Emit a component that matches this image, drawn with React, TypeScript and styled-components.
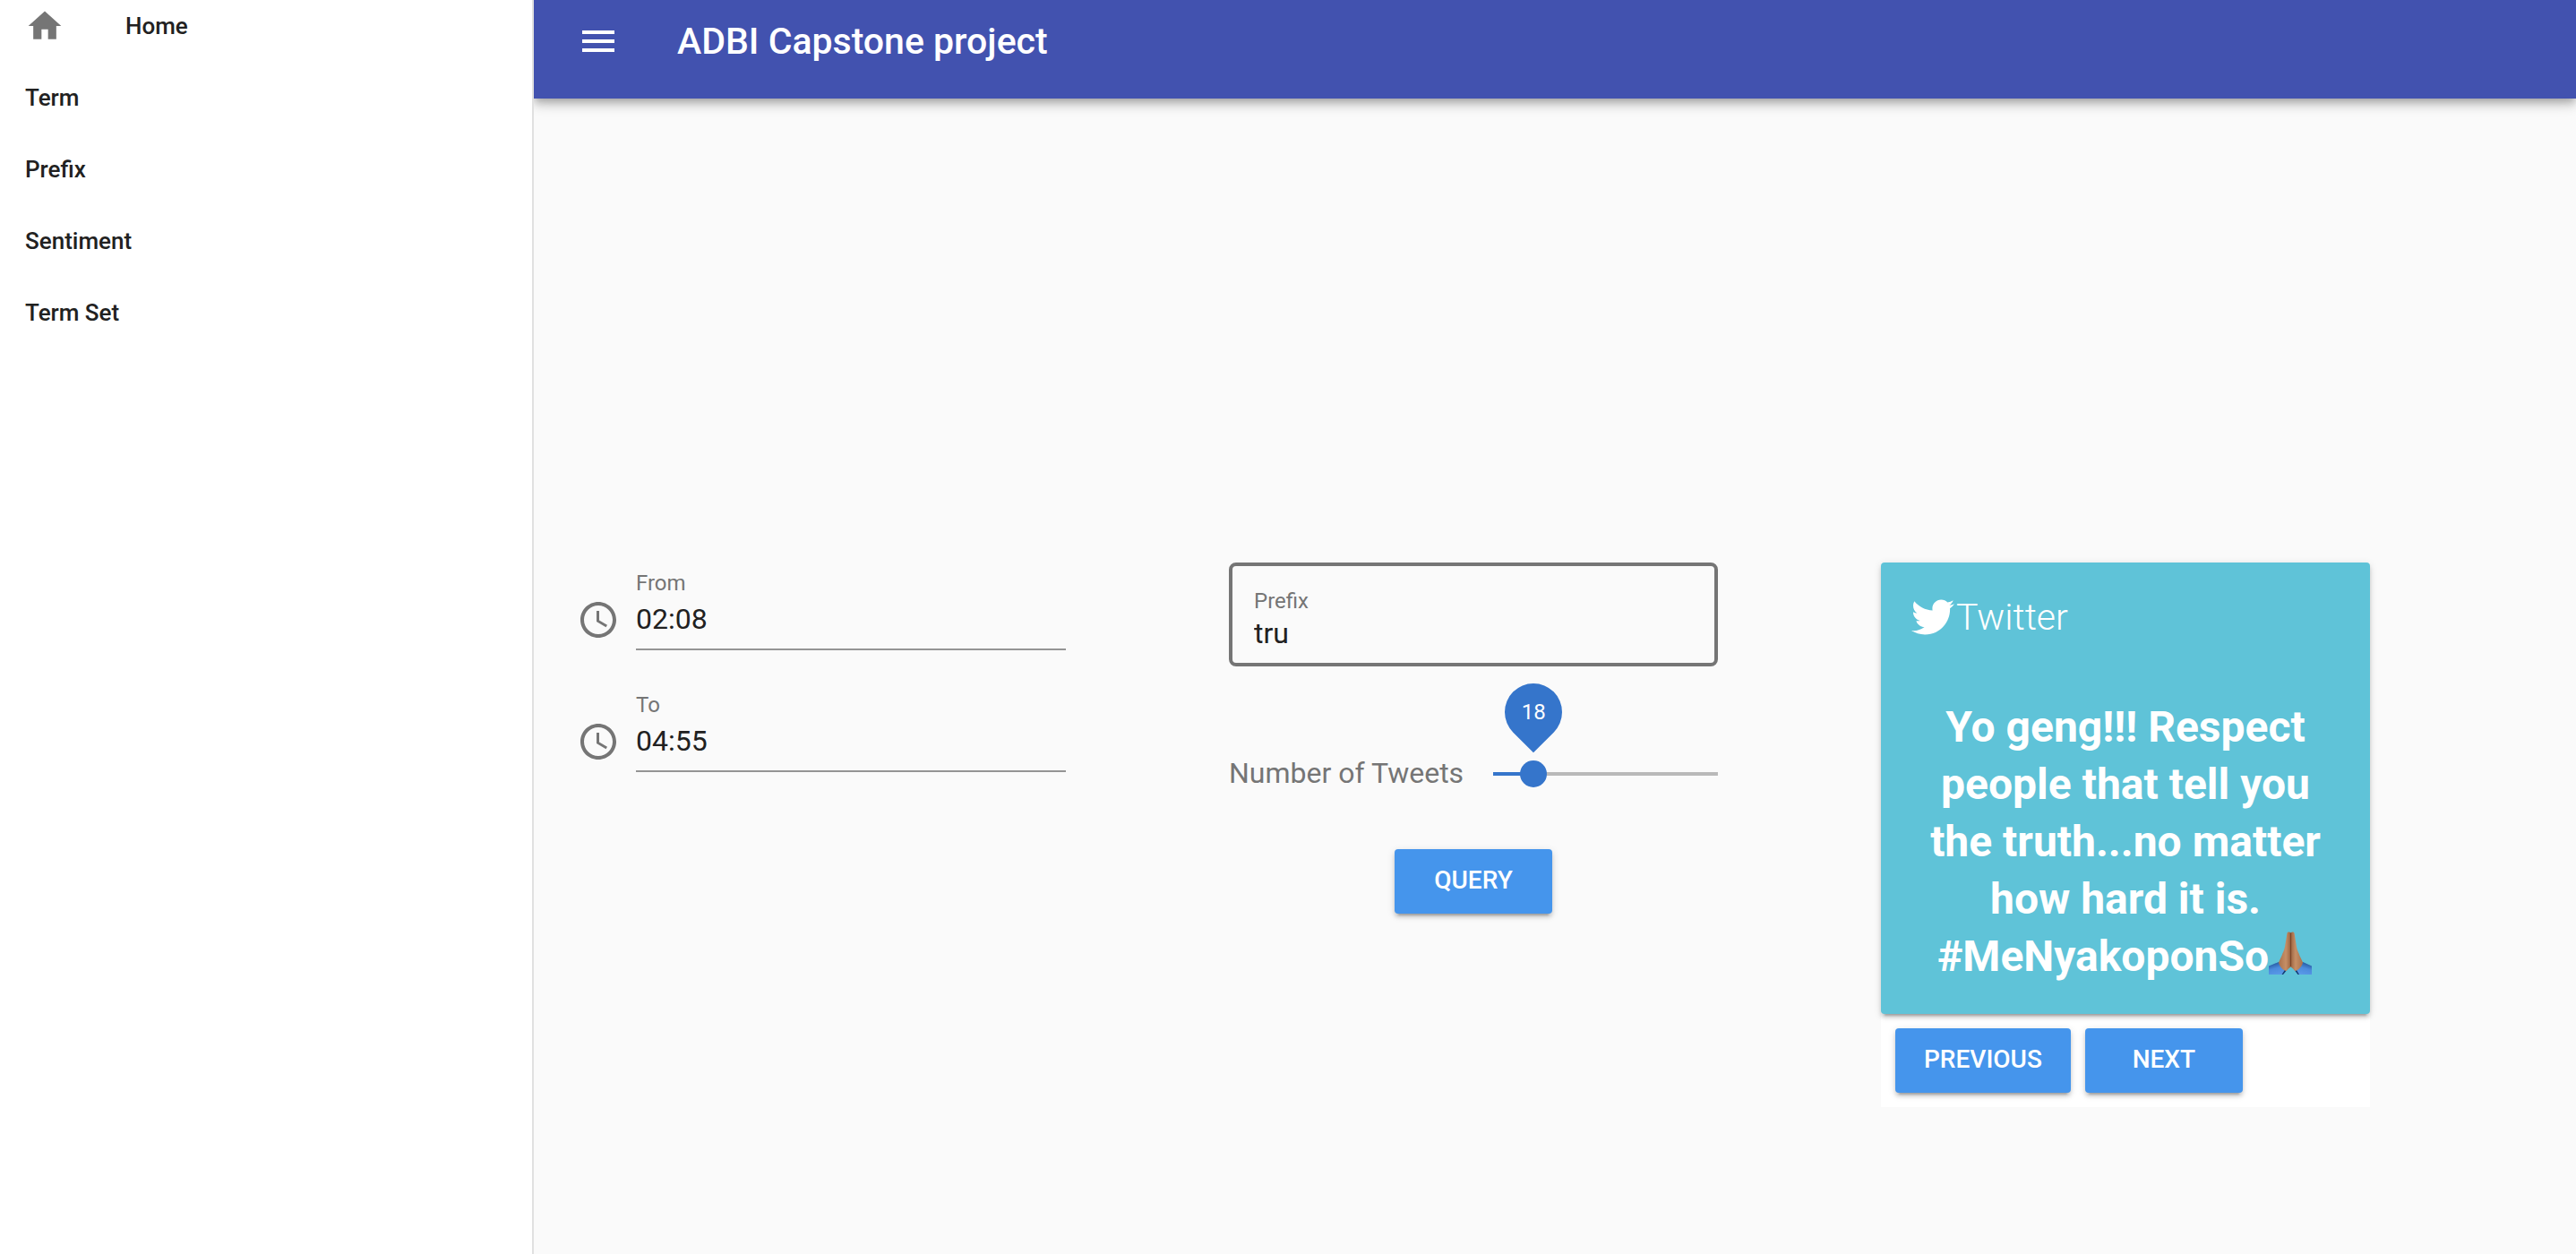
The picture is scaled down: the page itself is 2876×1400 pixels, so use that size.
import React, { useState } from "react";
import styled, { createGlobalStyle } from "styled-components";
import { MdAccessTime, MdHome, MdMenu } from "react-icons/md";
import { FaTwitter } from "react-icons/fa";

const GlobalStyle = createGlobalStyle`
  *, *::before, *::after { box-sizing: border-box; }
  body {
    margin: 0;
    background: #fafafa;
    color: #212121;
    font-family: Roboto, "Liberation Sans", sans-serif;
    -webkit-font-smoothing: antialiased;
  }
`;

const Shell = styled.div`
  display: flex;
  min-height: 100vh;
`;

const Drawer = styled.aside`
  position: relative;
  z-index: 1;
  flex: 0 0 596px;
  background: #fff;
  border-right: 2px solid #e0e0e0;
`;

const NavList = styled.nav`
  display: flex;
  flex-direction: column;
  gap: 22px;
`;

const NavLink = styled.a`
  display: flex;
  align-items: center;
  gap: 68px;
  height: 58px;
  padding: 0 28px;
  color: #212121;
  font-size: 26px;
  font-weight: 500;
  line-height: 32px;
  text-decoration: none;

  svg {
    color: #757575;
  }
`;

const Page = styled.div`
  flex: 1;
  min-width: 0;
`;

const TopBar = styled.header`
  display: flex;
  align-items: center;
  gap: 64px;
  height: 110px;
  padding: 0 48px 18px;
  background: #4252af;
  color: #fff;
  box-shadow: 0 4px 8px -2px rgba(0, 0, 0, 0.2), 0 8px 10px rgba(0, 0, 0, 0.14),
    0 2px 20px rgba(0, 0, 0, 0.12);
`;

const IconButton = styled.button`
  display: flex;
  padding: 0;
  border: 0;
  background: none;
  color: inherit;
`;

const Title = styled.h1`
  margin: 0;
  font-size: 41px;
  font-weight: 500;
  line-height: 48px;
`;

const Columns = styled.main`
  display: grid;
  grid-template-columns: repeat(12, 1fr);
  align-items: start;
  padding: 518px 48px 48px;
`;

const Column = styled.section<{ $start: number }>`
  grid-column: ${(p) => p.$start} / span 3;
  display: flex;
  flex-direction: column;
`;

const TimeRow = styled.div`
  display: flex;
  align-items: flex-end;
  gap: 18px;
  padding-top: 9px;

  & + & {
    margin-top: 38px;
  }

  svg {
    flex: none;
    margin-bottom: 10px;
    color: #757575;
  }
`;

const UnderlinedField = styled.div`
  flex: 1;
  display: flex;
  flex-direction: column;
  gap: 7px;
  padding-bottom: 14px;
  border-bottom: 2px solid #949494;
`;

const OutlinedField = styled.div`
  display: flex;
  flex-direction: column;
  gap: 3px;
  padding: 25px 24px 14px;
  border: 4px solid #757575;
  border-radius: 8px;
`;

const FieldLabel = styled.label`
  color: #757575;
  font-size: 24px;
  line-height: 28px;
`;

const FieldInput = styled.input`
  width: 100%;
  height: 38px;
  padding: 0;
  border: 0;
  outline: 0;
  background: none;
  color: #212121;
  font: 400 32px/38px Roboto, "Liberation Sans", sans-serif;
`;

const SliderRow = styled.div`
  display: flex;
  align-items: center;
  gap: 33px;
  height: 48px;
  margin: 96px 0 60px;
`;

const SliderLabel = styled.label`
  padding-bottom: 2px;
  color: #757575;
  font-size: 32px;
  line-height: 38px;
  white-space: nowrap;
`;

const SliderTrack = styled.div`
  position: relative;
  flex: 1;
  min-width: 0;
  height: 30px;
  background-position: center;
  background-size: 100% 4px;
  background-repeat: no-repeat;
`;

const SliderInput = styled.input`
  display: block;
  appearance: none;
  width: calc(100% + 30px);
  height: 30px;
  margin: 0 -15px;
  background: none;

  &::-webkit-slider-thumb {
    appearance: none;
    width: 30px;
    height: 30px;
    border-radius: 50%;
    background: #3575cb;
  }
`;

const SliderPin = styled.output`
  position: absolute;
  bottom: 52px;
  z-index: 0;
  display: flex;
  align-items: center;
  justify-content: center;
  width: 64px;
  height: 64px;
  margin-left: -32px;
  color: #fff;
  font-size: 24px;
  line-height: 28px;

  &::before {
    content: "";
    position: absolute;
    inset: 0;
    z-index: -1;
    border-radius: 50% 50% 50% 0;
    background: #3575cb;
    transform: rotate(-45deg);
  }
`;

const Button = styled.button<{ $centered?: boolean }>`
  align-self: ${(p) => (p.$centered ? "center" : "auto")};
  min-width: 176px;
  height: 72px;
  padding: 0 32px 2px;
  border: 0;
  border-radius: 4px;
  background: #4595ec;
  color: #fff;
  font: 500 28px/32px Roboto, "Liberation Sans", sans-serif;
  text-transform: uppercase;
  box-shadow: 0 6px 2px -4px rgba(0, 0, 0, 0.2), 0 4px 4px rgba(0, 0, 0, 0.14),
    0 2px 10px rgba(0, 0, 0, 0.12);
`;

const TweetPanel = styled.div`
  background: #fff;
`;

const TweetCard = styled.article`
  padding: 32px;
  border-radius: 4px;
  background: #5fc3d8;
  color: #fff;
  box-shadow: 0 6px 2px -4px rgba(0, 0, 0, 0.2), 0 4px 4px rgba(0, 0, 0, 0.14),
    0 2px 10px rgba(0, 0, 0, 0.12);
`;

const CardHeader = styled.h2`
  display: flex;
  align-items: center;
  gap: 2px;
  margin: 0;
  height: 58px;
  padding-left: 2px;
  font-size: 41px;
  font-weight: 300;
  line-height: 48px;
`;

const TweetText = styled.p`
  margin: 62px 0 0;
  font-size: 48px;
  font-weight: 700;
  line-height: 64px;
  text-align: center;
`;

const Emoji = styled.svg`
  width: 48px;
  height: 48px;
  margin: 0 2px -8px 0;
  vertical-align: 4px;
`;

const CardActions = styled.div`
  display: flex;
  gap: 16px;
  padding: 16px;
`;

const FoldedHands = () => (
  <Emoji viewBox="0 0 48 48" role="img" aria-label="folded hands">
    <defs>
      <linearGradient id="skinLeft" x1="0" x2="1">
        <stop offset="0" stopColor="#a9714c" />
        <stop offset="0.6" stopColor="#c68f66" />
        <stop offset="1" stopColor="#9c6441" />
      </linearGradient>
      <linearGradient id="skinRight" x1="0" x2="1">
        <stop offset="0" stopColor="#9c6441" />
        <stop offset="0.4" stopColor="#c68f66" />
        <stop offset="1" stopColor="#a9714c" />
      </linearGradient>
      <linearGradient id="sleeveLeft" x1="0.2" y1="0" x2="0.6" y2="1">
        <stop offset="0" stopColor="#1d4f93" />
        <stop offset="0.5" stopColor="#4b8bdc" />
        <stop offset="1" stopColor="#5a9ae8" />
      </linearGradient>
      <linearGradient id="sleeveRight" x1="0.8" y1="0" x2="0.4" y2="1">
        <stop offset="0" stopColor="#1d4f93" />
        <stop offset="0.5" stopColor="#4b8bdc" />
        <stop offset="1" stopColor="#5a9ae8" />
      </linearGradient>
    </defs>
    <path d="M11 34 0 38.5V48h16l4-5z" fill="url(#sleeveLeft)" />
    <path d="M38 34l10 4.500V48H32.500l-4-5z" fill="url(#sleeveRight)" />
    <path d="M16 48l5-6-1.500-1.500L14.500 48z" fill="#123a70" />
    <path d="M32.500 48 28 42l1.500-1.500L34 48z" fill="#123a70" />
    <path
      d="M24.500 1.500C23.500 0 21 0 20.500 1.800L18 17c-.5 4-2.500 6.500-3.300 9.500L11 34.500c1 4.500 4.500 8.500 8.500 9.500 2-1.500 3-3.500 5-4.500z"
      fill="url(#skinLeft)"
    />
    <path
      d="M24.500 1.500C25.500 0 28 0 28.500 1.800L31 17c.5 4 2.500 6.500 3.300 9.500L38 34.500c-1 4.500-4.500 8.500-8.500 9.500-2-1.500-3-3.500-5-4.500z"
      fill="url(#skinRight)"
    />
    <path d="M24.500 1.500V39" stroke="#7a4629" strokeWidth="1.200" fill="none" />
  </Emoji>
);

const links = ["Term", "Prefix", "Sentiment", "Term Set"];
const tweets = ["Yo geng!!! Respect people that tell you the truth...no matter how hard it is. #MeNyakoponSo"];

function TimeField({ id, label, initial }: { id: string; label: string; initial: string }) {
  const [value, setValue] = useState(initial);
  return (
    <TimeRow>
      <MdAccessTime size={48} aria-hidden />
      <UnderlinedField>
        <FieldLabel htmlFor={id}>{label}</FieldLabel>
        <FieldInput id={id} type="text" value={value} onChange={(e) => setValue(e.target.value)} />
      </UnderlinedField>
    </TimeRow>
  );
}

export default function App() {
  const [prefix, setPrefix] = useState("tru");
  const [count, setCount] = useState(18);
  const [index, setIndex] = useState(0);

  return (
    <>
      <GlobalStyle />
      <Shell>
        <Drawer>
          <NavList aria-label="Main">
            <NavLink href="#home">
              <MdHome size={44} aria-hidden />
              Home
            </NavLink>
            {links.map((name) => (
              <NavLink key={name} href={`#${name.toLowerCase().replace(" ", "-")}`}>
                {name}
              </NavLink>
            ))}
          </NavList>
        </Drawer>
        <Page>
          <TopBar>
            <IconButton type="button" aria-label="Toggle menu">
              <MdMenu size={48} />
            </IconButton>
            <Title>ADBI Capstone project</Title>
          </TopBar>
          <Columns>
            <Column $start={1}>
              <TimeField id="from" label="From" initial="02:08" />
              <TimeField id="to" label="To" initial="04:55" />
            </Column>
            <Column $start={5}>
              <OutlinedField>
                <FieldLabel htmlFor="prefix">Prefix</FieldLabel>
                <FieldInput id="prefix" type="text" value={prefix} onChange={(e) => setPrefix(e.target.value)} />
              </OutlinedField>
              <SliderRow>
                <SliderLabel htmlFor="count">Number of Tweets</SliderLabel>
                <SliderTrack
                  style={{ backgroundImage: `linear-gradient(to right, #3575cb ${count}%, #b9b9b9 ${count}%)` }}
                >
                  <SliderInput
                    id="count"
                    type="range"
                    min={0}
                    max={100}
                    value={count}
                    onChange={(e) => setCount(Number(e.target.value))}
                  />
                  <SliderPin htmlFor="count" style={{ left: `${count}%` }}>
                    {count}
                  </SliderPin>
                </SliderTrack>
              </SliderRow>
              <Button type="button" $centered>
                Query
              </Button>
            </Column>
            <Column $start={9}>
              <TweetPanel>
                <TweetCard>
                  <CardHeader>
                    <FaTwitter size={48} aria-hidden />
                    Twitter
                  </CardHeader>
                  <TweetText>
                    {tweets[index]}
                    <FoldedHands />
                  </TweetText>
                </TweetCard>
                <CardActions>
                  <Button type="button" onClick={() => setIndex(Math.max(0, index - 1))}>
                    Previous
                  </Button>
                  <Button type="button" onClick={() => setIndex(Math.min(tweets.length - 1, index + 1))}>
                    Next
                  </Button>
                </CardActions>
              </TweetPanel>
            </Column>
          </Columns>
        </Page>
      </Shell>
    </>
  );
}
